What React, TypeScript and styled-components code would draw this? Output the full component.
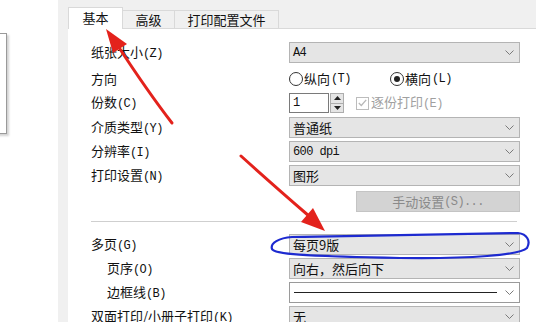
import React from "react";
import styled, { createGlobalStyle } from "styled-components";

const Global = createGlobalStyle`
  html, body { margin: 0; padding: 0; background: #fff; }
  body {
    font-family: "Noto Sans CJK SC", "Liberation Sans", sans-serif;
    font-size: 13px;
    color: #111;
  }
`;

const Screen = styled.div`
  position: relative;
  width: 536px;
  height: 322px;
  overflow: hidden;
  display: flex;
  background: #fff;
`;

const LeftPane = styled.div`
  width: 58px;
  flex: none;
  box-sizing: border-box;
  padding-top: 33px;
  background: #fff;
  overflow: hidden;
`;

const Preview = styled.div`
  margin-left: -20px;
  width: 27px;
  height: 101px;
  box-sizing: border-box;
  border: 1px solid #9a9a9a;
  background: #fff;
  box-shadow: 2px 2px 2px rgba(0, 0, 0, 0.18);
`;

const Gutter = styled.div`
  width: 10px;
  flex: none;
  background: #f0f0f0;
`;

const Dialog = styled.div`
  flex: 1;
  display: flex;
  flex-direction: column;
  background: #f0f0f0;
`;

const TabBar = styled.div`
  height: 28px;
  flex: none;
  display: flex;
  align-items: flex-end;
`;

const Tab = styled.div<{ $active?: boolean; $w: number }>`
  position: relative;
  z-index: ${(p) => (p.$active ? 1 : 0)};
  box-sizing: border-box;
  width: ${(p) => p.$w}px;
  height: ${(p) => (p.$active ? 22 : 18)}px;
  margin-bottom: ${(p) => (p.$active ? -1 : 0)}px;
  display: flex;
  align-items: center;
  justify-content: center;
  padding-bottom: ${(p) => (p.$active ? 2 : 0)}px;
  background: ${(p) => (p.$active ? "#fff" : "#f0f0f0")};
  border-top: 1px solid #d9d9d9;
  border-right: 1px solid #d9d9d9;
  border-left: ${(p) => (p.$active ? "1px solid #d9d9d9" : "none")};
  font-size: 13px;
  line-height: 16px;
  color: #111;
  white-space: nowrap;
`;

const Panel = styled.div`
  flex: 1;
  background: #fff;
  border-top: 1px solid #d9d9d9;
  padding: 13px 16px 0 23px;
  display: flex;
  flex-direction: column;
  overflow: hidden;
`;

const Row = styled.div<{ $h?: number; $mt?: number }>`
  flex: none;
  display: grid;
  grid-template-columns: 198px 231px;
  align-items: center;
  height: ${(p) => p.$h ?? 21}px;
  margin-top: ${(p) => p.$mt ?? 3}px;
`;

const Label = styled.div<{ $indent?: boolean }>`
  padding-left: ${(p) => (p.$indent ? 16 : 0)}px;
  font-size: 13px;
  line-height: 16px;
  color: #111;
  white-space: nowrap;
`;

const Key = styled.span`
  font-family: "Liberation Mono", monospace;
  font-size: 12px;
  letter-spacing: -0.6px;
`;

const Combo = styled.div<{ $white?: boolean }>`
  box-sizing: border-box;
  height: 21px;
  display: flex;
  align-items: center;
  gap: 8px;
  padding: 0 5px 0 3px;
  border: 1px solid ${(p) => (p.$white ? "#9a9a9a" : "#b4b4b4")};
  background: ${(p) => (p.$white ? "#fff" : "#e5e5e5")};
  font-size: 13px;
  line-height: 16px;
  color: #111;
`;

const ComboText = styled.span`
  flex: 1;
  display: flex;
  align-items: center;
  white-space: nowrap;
`;

const LineSample = styled.span`
  flex: 1;
  height: 1px;
  margin-left: 1px;
  background: #222;
`;

const RadioGroup = styled.div`
  display: flex;
  align-items: center;
`;

const RadioItem = styled.div<{ $w?: number }>`
  display: flex;
  align-items: center;
  gap: 1px;
  width: ${(p) => (p.$w ? `${p.$w}px` : "auto")};
  font-size: 13px;
  line-height: 16px;
  white-space: nowrap;
`;

const RadioCircle = styled.span<{ $on?: boolean }>`
  width: 14px;
  height: 14px;
  box-sizing: border-box;
  border-radius: 50%;
  border: 1px solid #333;
  background: #fff;
  display: flex;
  align-items: center;
  justify-content: center;
  &::after {
    content: "";
    width: 6px;
    height: 6px;
    border-radius: 50%;
    background: #222;
    display: ${(p) => (p.$on ? "block" : "none")};
  }
`;

const SpinRow = styled.div`
  display: flex;
  align-items: center;
  height: 20px;
`;

const SpinInput = styled.div`
  box-sizing: border-box;
  width: 40px;
  height: 20px;
  border: 1px solid #7a7a7a;
  background: #fff;
  padding-left: 3px;
  display: flex;
  align-items: center;
  font-family: "Liberation Mono", monospace;
  font-size: 12px;
`;

const SpinButtons = styled.div`
  margin-left: 1px;
  width: 14px;
  height: 20px;
  box-sizing: border-box;
  border: 1px solid #adadad;
  background: #e5e5e5;
  display: flex;
  flex-direction: column;
`;

const SpinHalf = styled.div`
  flex: 1;
  display: flex;
  align-items: center;
  justify-content: center;
  & + & {
    border-top: 1px solid #adadad;
  }
`;

const CheckBox = styled.span`
  margin-left: 12px;
  width: 13px;
  height: 13px;
  box-sizing: border-box;
  border: 1px solid #bcbcbc;
  background: #fff;
  display: flex;
  align-items: center;
  justify-content: center;
`;

const DisabledText = styled.span`
  margin-left: 2px;
  color: #a0a0a0;
  font-size: 13px;
  line-height: 16px;
  white-space: nowrap;
`;

const Button = styled.div`
  grid-column: 2;
  margin-left: 67px;
  height: 21px;
  box-sizing: border-box;
  border: 1px solid #c4c4c4;
  background: #d3d3d3;
  color: #8a8a8a;
  display: flex;
  align-items: center;
  justify-content: center;
  font-size: 13px;
  line-height: 16px;
  white-space: nowrap;
`;

const Separator = styled.div`
  flex: none;
  margin-top: 9px;
  width: 426px;
  height: 1px;
  background: #cfcfcf;
`;

const Overlay = styled.svg`
  position: absolute;
  left: 0;
  top: 0;
  width: 536px;
  height: 322px;
  pointer-events: none;
`;

const Chevron = () => (
  <svg width="9" height="5" viewBox="0 0 9 5">
    <path d="M0.5 0.5 L4.5 4.5 L8.5 0.5" fill="none" stroke="#7a7a7a" strokeWidth="1" />
  </svg>
);

const Tri = ({ down }: { down?: boolean }) => (
  <svg width="7" height="4" viewBox="0 0 7 4">
    <path d={down ? "M0 0 L7 0 L3.5 4 Z" : "M0 4 L7 4 L3.5 0 Z"} fill="#222" />
  </svg>
);

const ComboBox = ({ children, white }: { children: React.ReactNode; white?: boolean }) => (
  <Combo $white={white}>
    <ComboText>{children}</ComboText>
    <Chevron />
  </Combo>
);

export default function App() {
  return (
    <>
      <Global />
      <Screen>
        <LeftPane>
          <Preview />
        </LeftPane>
        <Gutter />
        <Dialog>
          <TabBar>
            <Tab $active $w={55}>基本</Tab>
            <Tab $w={52}>高级</Tab>
            <Tab $w={104}>打印配置文件</Tab>
          </TabBar>
          <Panel>
            <Row $mt={0}>
              <Label>纸张大小<Key>(Z)</Key></Label>
              <ComboBox><Key>A4</Key></ComboBox>
            </Row>
            <Row $mt={5}>
              <Label>方向</Label>
              <RadioGroup>
                <RadioItem $w={101}>
                  <RadioCircle />
                  纵向<Key>(T)</Key>
                </RadioItem>
                <RadioItem>
                  <RadioCircle $on />
                  横向<Key>(L)</Key>
                </RadioItem>
              </RadioGroup>
            </Row>
            <Row $mt={4} $h={20}>
              <Label>份数<Key>(C)</Key></Label>
              <SpinRow>
                <SpinInput>1</SpinInput>
                <SpinButtons>
                  <SpinHalf><Tri /></SpinHalf>
                  <SpinHalf><Tri down /></SpinHalf>
                </SpinButtons>
                <CheckBox>
                  <svg width="9" height="8" viewBox="0 0 9 8">
                    <path d="M0.8 4 L3.3 6.5 L8.2 0.8" fill="none" stroke="#b8b8b8" strokeWidth="1.3" />
                  </svg>
                </CheckBox>
                <DisabledText>逐份打印<Key>(E)</Key></DisabledText>
              </SpinRow>
            </Row>
            <Row $mt={4}>
              <Label>介质类型<Key>(Y)</Key></Label>
              <ComboBox>普通纸</ComboBox>
            </Row>
            <Row>
              <Label>分辨率<Key>(I)</Key></Label>
              <ComboBox><Key>600 dpi</Key></ComboBox>
            </Row>
            <Row>
              <Label>打印设置<Key>(N)</Key></Label>
              <ComboBox>图形</ComboBox>
            </Row>
            <Row $mt={5}>
              <Button>手动设置<Key>(S)...</Key></Button>
            </Row>
            <Separator />
            <Row $mt={12}>
              <Label>多页<Key>(G)</Key></Label>
              <ComboBox>每页9版</ComboBox>
            </Row>
            <Row>
              <Label $indent>页序<Key>(O)</Key></Label>
              <ComboBox>向右，然后向下</ComboBox>
            </Row>
            <Row>
              <Label $indent>边框线<Key>(B)</Key></Label>
              <ComboBox white><LineSample /></ComboBox>
            </Row>
            <Row>
              <Label>双面打印/小册子打印<Key>(K)</Key></Label>
              <ComboBox>无</ComboBox>
            </Row>
          </Panel>
        </Dialog>
        <Overlay viewBox="0 0 536 322">
          <path d="M172 123 Q148 92 118 46" fill="none" stroke="#e3221c" strokeWidth="3" strokeLinecap="round" />
          <polygon points="106,29 127,44 113,53" fill="#e3221c" />
          <path d="M241 156 Q272 184 309 216" fill="none" stroke="#e3221c" strokeWidth="3" strokeLinecap="round" />
          <polygon points="325,231 301,222 313,208" fill="#e3221c" />
          <path
            d="M292 237 C279 238 270 243 272 249 C274 254 300 256 400 258 C470 259 520 255 527 248 C531 241 527 234 518 233 C470 234 380 236 292 237"
            fill="none"
            stroke="#1d2ad0"
            strokeWidth="2.2"
            strokeLinecap="round"
          />
        </Overlay>
      </Screen>
    </>
  );
}
